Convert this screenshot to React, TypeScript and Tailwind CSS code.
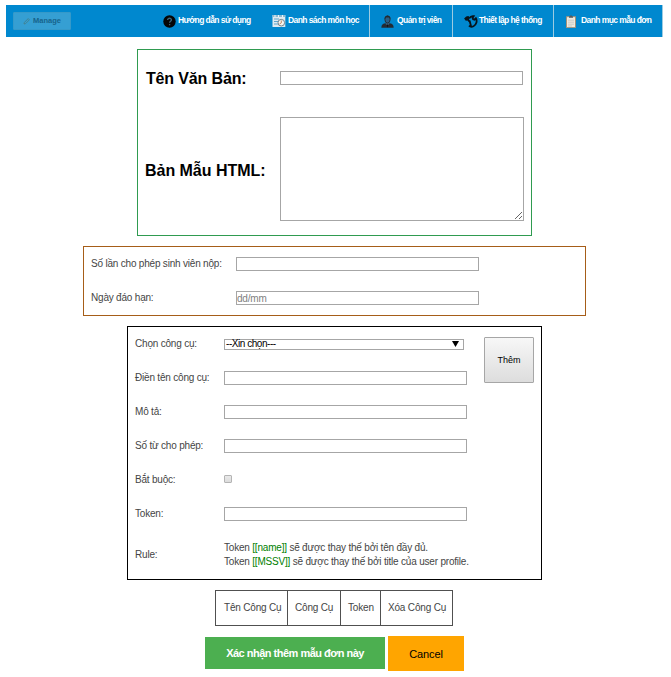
import React from "react";

function Label({ children, className = "" }: { children: React.ReactNode; className?: string }) {
  return (
    <div className={"shrink-0 " + className}>
      <span className="inline-block whitespace-nowrap">{children}</span>
    </div>
  );
}

const field = "block h-[14px] w-[243px] border border-[#a6a6a6] bg-white px-0 text-[10px] leading-[12px] tracking-[-0.2px] outline-none placeholder:text-[#808080]";

function QuestionIcon() {
  return (
    <svg width="13" height="13" viewBox="0 0 13 13">
      <circle cx="6.5" cy="6.5" r="6.2" fill="#050505" />
      <path d="M4.6 5.1C4.6 2.6 8.5 2.7 8.4 5C8.3 6.3 6.6 6.3 6.6 7.8M6.6 9.1v1.2" fill="none" stroke="#3c6478" strokeWidth="1.3" />
    </svg>
  );
}

function CourseIcon() {
  return (
    <svg width="14" height="14" viewBox="0 0 14 14">
      <path d="M.5 1h12.8v12H.5z" fill="#dfeaf0" />
      <path d="M.5 1h12.8v2H.5z" fill="#8dbad2" />
      <path d="M3 1v2M6.5 1v2M10.5 1v2" stroke="#eef6fa" />
      <path d="M2 5h5M2 7.5h4M2 10h4" stroke="#5da5cc" />
      <circle cx="9.3" cy="8.7" r="3.3" fill="#f4f4f0" stroke="#71838d" />
      <path d="M9.3 6.5v2.4l-1.7 1" fill="none" stroke="#c48a63" />
    </svg>
  );
}

function AdminIcon() {
  return (
    <svg width="13" height="13" viewBox="0 0 13 13">
      <path d="M.4 12.8c0-3 1-3.7 3.7-4.5h4.8c2.7.8 3.7 1.5 3.7 4.5z" fill="#232b33" />
      <path d="M4.7 7h3.6v2L6.5 11 4.7 9z" fill="#365c78" />
      <ellipse cx="6.5" cy="4.4" rx="2.6" ry="3.6" fill="#285f86" stroke="#23313b" />
      <path d="M3.5 4C3 .1 10-.7 9.5 4L8.4 2.5H5z" fill="#242a30" />
      <path d="M6.5 9.2l.8 1.3-.8 2-.8-2z" fill="#111" />
    </svg>
  );
}

function ToolsIcon() {
  return (
    <svg width="14" height="13" viewBox="0 0 14 13">
      <path d="M.1 3.6 2.2 1.5 4.3 1 6 2.6 5 4.5 6.4 6.2 5 7.3 3.4 5.4 1.8 5.8z" fill="#07131b" />
      <path d="M5.3 3.2C6.3 1.6 8 .9 9.7 1.2L8.6 2.8l.5 1.4 1.5.5 1.3-1.5c1.6 2.8.4 6.6-2.4 8-1.7.8-3.5.5-4.5-.6" fill="none" stroke="#07131b" strokeWidth="1.8" />
      <path d="M5.5 5.5 7 11" stroke="#07131b" strokeWidth="1.8" />
    </svg>
  );
}

function FormIcon() {
  return (
    <svg width="10" height="13" viewBox="0 0 10 13">
      <path d="M.5 1.7h9v11h-9z" fill="#efe9dd" stroke="#a29078" />
      <path d="M3 2.8V1.2h1L4.5.2h1L6 1.2h1v1.6z" fill="#535b60" />
      <path d="M2 5.2h6M2 7.2h6M2 9.2h6M2 11h4" stroke="#b8c0c1" strokeWidth=".7" />
    </svg>
  );
}

function NavText({ children }: { children: string }) {
  return <span className="mb-px whitespace-nowrap leading-[31px]">{children}</span>;
}

function Navbar() {
  return (
    <nav className="flex h-8 w-[657px] bg-[#0088cf] text-[8.5px] font-bold tracking-[-0.58px] text-white">
      <div className="w-[157px] shrink-0 pl-[7px] pt-[7px]">
        <button className="flex h-[18px] w-[58px] items-center justify-center gap-[3px] rounded-[1px] border border-[#3599c9] bg-[#359fd3] text-[7.5px] leading-none tracking-[0px] text-[#17648c]">
          <svg width="7" height="7" viewBox="0 0 7 7" fill="none" stroke="#438392">
            <path d="M1 6 1.4 4.4 5.2.6 6.4 1.8 2.6 5.6z" />
          </svg>
          Manage
        </button>
      </div>
      <div className="flex w-[109px] shrink-0 items-center gap-[2px]"><QuestionIcon /><NavText>Hướng dẫn sử dụng</NavText></div>
      <div className="flex w-[97px] shrink-0 items-center gap-[2px]"><CourseIcon /><NavText>Danh sách môn học</NavText></div>
      <div className="flex w-[83px] shrink-0 items-center gap-[3px] border-l border-[#9ccbe1] pl-[11px]"><AdminIcon /><NavText>Quản trị viên</NavText></div>
      <div className="flex w-[101px] shrink-0 items-center gap-[1px] border-l border-[#9ccbe1] pl-[11px]"><ToolsIcon /><NavText>Thiết lập hệ thống</NavText></div>
      <div className="flex w-[110px] shrink-0 items-center gap-[5px] border-x border-[#9ccbe1] pl-3"><FormIcon /><NavText>Danh mục mẫu đơn</NavText></div>
    </nav>
  );
}

export default function App() {
  return (
    <main className="h-[677px] w-[671px] overflow-hidden bg-white pl-[6px] pt-[5px] font-['Liberation_Sans',Arial,sans-serif] text-[10px] leading-[14px] tracking-[-0.2px] text-[#454545]">
      <Navbar />

      <section className="ml-[131px] mt-3 h-[187px] w-[395px] border border-[#2f9b50] text-black">
        <div className="flex pt-[21px]">
          <Label className="w-[142px] pl-2 text-[16px] font-bold leading-[15px] tracking-[-0.15px]">Tên Văn Bản:</Label>
          <input className={field} aria-label="Tên Văn Bản" />
        </div>
        <div className="mt-[31px] flex items-center">
          <Label className="w-[142px] pl-[7px] pt-[4px] text-[16px] font-bold leading-5 tracking-[-0.03px]">Bản Mẫu HTML:</Label>
          <textarea className="block h-[104px] w-[244px] resize border border-[#a6a6a6] outline-none" aria-label="Bản Mẫu HTML" />
        </div>
      </section>

      <section className="ml-[77px] mt-[10px] flex h-[70px] w-[503px] flex-col gap-5 border border-[#a65d18] pl-[7px] pt-[10px]">
        <div className="flex"><Label className="w-[145px]">Số lần cho phép sinh viên nộp:</Label><input className={field} aria-label="Số lần" /></div>
        <div className="flex"><Label className="w-[145px]">Ngày đáo hạn:</Label><input className={field} placeholder="dd/mm" /></div>
      </section>

      <section className="ml-[121px] mt-[10px] flex h-[254px] w-[415px] border border-black pl-[7px] pt-[10px]">
        <div className="flex w-[349px] shrink-0 flex-col gap-5">
          <div className="flex h-[14px]">
            <Label className="w-[89px]">Chọn công cụ:</Label>
            <div className="mt-[2px] flex h-[11px] w-[240px] items-center justify-between border border-[#a6a6a6] pl-[1px] pr-1 leading-[10px] tracking-[-0.45px] text-black">
              <span className="-mt-px">--Xin chọn---</span>
              <svg className="-mt-px" width="7" height="6" viewBox="0 0 7 6"><path d="M0 0h7L3.5 6z" fill="black" /></svg>
            </div>
          </div>
          <div className="flex"><Label className="w-[89px]">Điền tên công cụ:</Label><input className={field} aria-label="Tên công cụ" /></div>
          <div className="flex"><Label className="w-[89px]">Mô tả:</Label><input className={field} aria-label="Mô tả" /></div>
          <div className="flex"><Label className="w-[89px]">Số từ cho phép:</Label><input className={field} aria-label="Số từ" /></div>
          <div className="flex"><Label className="w-[89px]">Bắt buộc:</Label><input type="checkbox" className="mt-[2px] size-2 appearance-none rounded-[1px] border border-[#b4b4b4] bg-linear-to-b from-[#e9e9e9] to-[#dcdcdc]" aria-label="Bắt buộc" /></div>
          <div className="flex"><Label className="w-[89px]">Token:</Label><input className={field} aria-label="Token" /></div>
          <div className="flex items-center">
            <Label className="w-[89px]">Rule:</Label>
            <div className="whitespace-nowrap">
              <p>Token <span className="text-[#008000]">[[name]]</span> sẽ được thay thế bởi tên đầy đủ.</p>
              <p>Token <span className="text-[#008000]">[[MSSV]]</span> sẽ được thay thế bởi title của user profile.</p>
            </div>
          </div>
        </div>
        <button className="h-[46px] w-[50px] shrink-0 rounded-[1px] border border-[#a6a6a6] bg-linear-to-b from-[#f7f7f7] to-[#dddddd] text-[9px] tracking-normal text-black">Thêm</button>
      </section>

      <div className="ml-[209px] mt-[10px] flex h-9 w-[238px] border border-[#505050] leading-[34px] tracking-[-0.18px]">
        <div className="w-[72px] whitespace-nowrap border-r border-[#505050] pl-2">Tên Công Cụ</div>
        <div className="w-[53px] whitespace-nowrap border-r border-[#505050] pl-[7px]">Công Cụ</div>
        <div className="w-[40px] whitespace-nowrap border-r border-[#505050] pl-[7px]">Token</div>
        <div className="whitespace-nowrap pl-[7px]">Xóa Công Cụ</div>
      </div>
      <div className="ml-[199px] mt-[10px] flex items-start gap-[3px]">
        <button className="mt-px h-8 w-[180px] whitespace-nowrap bg-[#4caf50] text-[11px] font-bold tracking-[-0.5px] text-white">Xác nhận thêm mẫu đơn này</button>
        <button className="h-[35px] w-[76px] bg-[#ffa500] text-[11px] tracking-[-0.15px] text-black">Cancel</button>
      </div>
    </main>
  );
}
